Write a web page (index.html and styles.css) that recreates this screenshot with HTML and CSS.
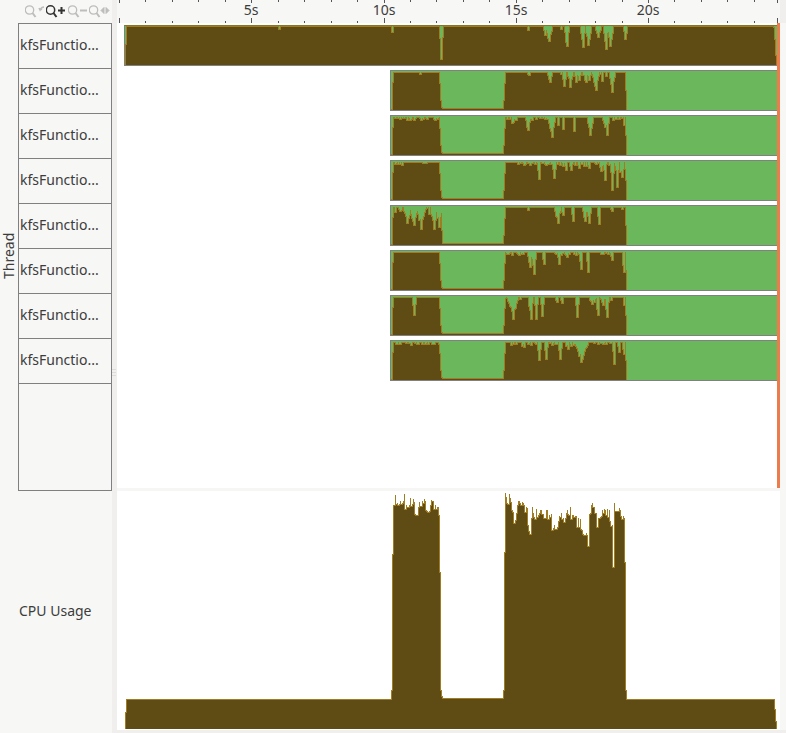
FILE: index.html
```html
<!DOCTYPE html>
<html lang="en">
<head>
    <meta charset="UTF-8">
    <title>Thread Timeline</title>
    <link rel="stylesheet" href="styles.css">
</head>
<body>
    <div class="app">
        <div class="sidebar">
            <div class="thread-side">
                <div class="axis-title">Thread</div>
                <div class="thread-col">
                    <div class="zoom-bar">
                        <svg class="zoom-icon" viewBox="0 0 21 16"><circle cx="4.5" cy="7" r="4.2"/><path class="handle" d="M7.5 10l3 4"/><path class="mark thin" d="M19 4c-2 0-3 1-4 3l-1-2m1 2l2-1"/></svg>
                        <svg class="zoom-icon active" viewBox="0 0 21 16"><circle cx="4.5" cy="7" r="4.2"/><path class="handle" d="M7.5 10l3 4"/><path class="mark" d="M12 7.5h7M15.5 4v7"/></svg>
                        <svg class="zoom-icon" viewBox="0 0 21 16"><circle cx="4.5" cy="7" r="4.2"/><path class="handle" d="M7.5 10l3 4"/><path class="mark" d="M12 7.5h7"/></svg>
                        <svg class="zoom-icon" viewBox="0 0 21 16"><circle cx="4.5" cy="7" r="4.2"/><path class="handle" d="M7.5 10l3 4"/><path class="mark fat" d="M12 7.5l3-3v6zM20 7.5l-3-3v6z"/></svg>
                    </div>
                    <div class="labels">
                        <div class="label">kfsFunctio...</div>
                        <div class="label">kfsFunctio...</div>
                        <div class="label">kfsFunctio...</div>
                        <div class="label">kfsFunctio...</div>
                        <div class="label">kfsFunctio...</div>
                        <div class="label">kfsFunctio...</div>
                        <div class="label">kfsFunctio...</div>
                        <div class="label">kfsFunctio...</div>
                    </div>
                </div>
            </div>
            <div class="cpu-label">CPU Usage</div>
        </div>

        <div class="splitter"><span class="grip"></span></div>

        <div class="main">
            <svg id="ruler" class="ruler" width="663" height="23"></svg>
            <div class="threads">
                <div class="track track-full"></div>
                <div class="track track-late"></div>
                <div class="track track-late"></div>
                <div class="track track-late"></div>
                <div class="track track-late"></div>
                <div class="track track-late"></div>
                <div class="track track-late"></div>
                <div class="track track-late"></div>
                <div class="cursor"></div>
            </div>
            <div class="strip"></div>
            <svg id="cpu" class="cpu" width="663" height="239"></svg>
            <div class="footer"></div>
        </div>

        <div class="gutter"></div>
    </div>

    <script src="chart.js"></script>
</body>
</html>
```

FILE: styles.css
```css
html, body {
    margin: 0;
    height: 100%;
    overflow: hidden;
}

body {
    font-family: "Noto Sans", sans-serif;
    font-size: 14px;
    color: #3c3c3c;
    background: #f7f7f5;
}

.app {
    display: flex;
    height: 733px;
}

.sidebar {
    width: 112px;
    display: flex;
    flex-direction: column;
}

.thread-side {
    display: flex;
    height: 491px;
}

.axis-title {
    width: 16px;
    margin-right: 2px;
    padding-bottom: 20px;
    box-sizing: border-box;
    display: flex;
    align-items: center;
    justify-content: center;
    writing-mode: vertical-rl;
    transform: rotate(180deg);
}

.thread-col {
    flex: 1;
    display: flex;
    flex-direction: column;
}

.zoom-bar {
    height: 23px;
    padding: 3px 0 0 7px;
    box-sizing: border-box;
    display: flex;
}

.zoom-icon {
    width: 21px;
    height: 16px;
    fill: none;
    stroke: #bdbdbb;
    stroke-width: 1.3;
}

.zoom-icon .handle {
    stroke-width: 2;
}

.zoom-icon .mark {
    stroke-width: 2;
}

.zoom-icon .mark.thin {
    stroke-width: 1.5;
}

.zoom-icon .mark.fat {
    fill: #bdbdbb;
    stroke-width: 1;
}

.zoom-icon.active {
    margin-right: 1px;
    stroke: #333;
    stroke-width: 1.5;
}

.labels {
    flex: 1;
    border: 1px solid #808080;
}

.label {
    height: 45px;
    box-sizing: border-box;
    padding: 0 0 3px 1px;
    border-bottom: 1px solid #808080;
    display: flex;
    align-items: center;
    white-space: nowrap;
}

.cpu-label {
    flex: 1;
    display: flex;
    align-items: center;
    padding: 0 0 3px 19px;
}

.splitter {
    width: 5px;
    padding-top: 369px;
    box-sizing: border-box;
    background: #f0efed;
}

.grip {
    display: block;
    width: 4px;
    height: 7px;
    background: repeating-linear-gradient(#dcdcda 0, #dcdcda 1px, transparent 1px, transparent 3px);
}

.main {
    width: 663px;
    display: flex;
    flex-direction: column;
}

.ruler {
    display: block;
    background: #f7f7f5;
}

.ruler text {
    font-family: "Noto Sans", sans-serif;
    font-size: 14px;
    fill: #3c3c3c;
    text-anchor: middle;
}

.threads {
    position: relative;
    height: 465px;
    padding: 2px 0 0 7px;
    box-sizing: border-box;
    background: #fff;
    display: flex;
    flex-direction: column;
    gap: 4px;
}

.track {
    height: 41px;
    box-sizing: border-box;
    background: #6bb75c;
    border: 1px solid #808080;
    border-right: none;
}

.track svg {
    display: block;
}

.track-full {
    width: 654px;
    border-top-color: #8a7526;
}

.track-late {
    width: 388px;
    margin-left: 266px;
}

.cursor {
    position: absolute;
    top: 0;
    bottom: 0;
    left: 660px;
    width: 3px;
    background: #ee7b4c;
}

.strip {
    height: 3px;
    background: #f6f6f5;
}

.cpu {
    display: block;
    background: #fff;
}

.footer {
    height: 3px;
    background: #f0efed;
}

.gutter {
    flex: 1;
    border-top: 23px solid #f0efed;
    border-bottom: 3px solid #f0efed;
}
```

FILE: chart.js
```js
const SVG_NS = 'http://www.w3.org/2000/svg';
const AMBER = '#a07c22';
const DARK = '#5f4b14';

// [start, end, depth] in page x, tapered notches cut from the top of a track
const threads = [
    { dips: [[279, 279, 2], [392, 392, 5], [440, 442, 32], [528, 528, 3], [544, 546, 8], [546, 551, 14], [561, 561, 2], [565, 568, 19], [581, 584, 20], [586, 590, 18], [596, 600, 10], [604, 607, 22], [608, 612, 19], [624, 626, 12]] },
    { dips: [[420, 420, 2], [528, 529, 3], [548, 551, 10], [561, 561, 2], [563, 565, 14], [568, 572, 15], [575, 577, 10], [578, 580, 8], [584, 587, 10], [588, 590, 8], [593, 598, 18], [602, 602, 9], [606, 606, 4], [610, 614, 20]], teeth: [[572, 600, 3]] },
    { dips: [[526, 529, 13], [549, 554, 20], [558, 558, 8], [563, 563, 12], [574, 574, 14], [588, 592, 18], [603, 606, 10], [606, 608, 18], [624, 624, 8]], teeth: [[393, 439, 3], [505, 516, 7], [530, 548, 3], [612, 624, 3]] },
    { dips: [[538, 539, 17], [553, 555, 16], [565, 566, 8], [570, 571, 8], [578, 579, 6], [588, 589, 6], [604, 605, 18], [611, 613, 28], [616, 618, 25], [621, 622, 15]], teeth: [[395, 405, 3], [421, 428, 2], [512, 560, 3], [560, 600, 4], [600, 625, 12]] },
    { dips: [[404, 410, 16], [410, 417, 18], [417, 424, 22], [432, 436, 22], [436, 441, 20], [528, 528, 3], [555, 560, 16], [562, 563, 8], [572, 573, 14], [583, 586, 14], [587, 590, 16], [598, 599, 17], [611, 612, 4], [622, 622, 2]], teeth: [[393, 404, 6], [424, 432, 9]], late: true },
    { dips: [[528, 531, 15], [532, 535, 22], [543, 544, 12], [558, 559, 12], [566, 567, 5], [580, 581, 17], [587, 588, 20], [611, 612, 8], [623, 624, 20]], teeth: [[505, 525, 3], [555, 580, 3], [595, 612, 3]] },
    { dips: [[413, 415, 18], [508, 517, 22], [520, 520, 2], [529, 532, 22], [535, 537, 22], [541, 543, 19], [556, 557, 5], [561, 562, 6], [576, 578, 20], [590, 594, 7], [597, 598, 18], [601, 604, 8], [606, 607, 20], [624, 624, 8]], teeth: [[505, 508, 3], [590, 612, 5]] },
    { dips: [[538, 540, 18], [545, 547, 17], [559, 561, 17], [568, 568, 7], [575, 587, 20], [613, 614, 22], [618, 619, 10], [623, 624, 12]], teeth: [[395, 439, 4], [505, 537, 5], [548, 575, 4], [590, 612, 2]] }
];

// top of the CPU curve in page y, held until the next x
const cpuLevels = [
    [393, 504], [395, 500], [403, 497], [405, 505], [407, 508], [409, 502], [411, 505], [413, 500], [415, 510], [418, 504], [422, 499], [426, 506], [430, 500], [434, 505], [437, 503], [439, 515],
    [505, 498], [512, 507], [514, 518], [516, 510], [518, 500], [525, 510], [528, 525], [530, 532], [531, 513], [540, 514], [552, 525], [558, 517], [566, 513], [577, 523], [581, 533], [588, 548], [589, 508], [597, 522], [600, 513], [610, 520], [613, 563], [614, 508], [620, 516], [625, 562]
];

function noise(i) {
    const s = Math.sin(i * 12.9898) * 43758.5453;
    return s - Math.floor(s);
}

function svgEl(name, attrs) {
    const el = document.createElementNS(SVG_NS, name);
    Object.keys(attrs).forEach(key => el.setAttribute(key, attrs[key]));
    return el;
}

// one amber column per pixel, with the dark body eroded a pixel inside it
function drawArea(svg, tops, bottom, offset) {
    let light = '';
    let dark = '';
    Object.keys(tops).forEach(key => {
        const x = Number(key);
        const y = tops[x];
        const bodyTop = Math.max(y, tops[x - 1] ?? bottom, tops[x + 1] ?? bottom) + 1;
        light += `M${x - offset + 0.5} ${y}V${bottom}`;
        if (bodyTop < bottom) {
            dark += `M${x - offset + 0.5} ${bodyTop}V${bottom}`;
        }
    });
    svg.appendChild(svgEl('path', { d: light, stroke: AMBER, 'shape-rendering': 'crispEdges' }));
    svg.appendChild(svgEl('path', { d: dark, stroke: DARK, 'shape-rendering': 'crispEdges' }));
}

function cutDips(tops, spec, row) {
    (spec.teeth || []).forEach(([start, end, depth]) => {
        for (let x = start; x <= end; x++) {
            if (noise(x * (row + 3)) > 0.45) {
                tops[x] = Math.max(tops[x], 1 + Math.round(noise(x + row * 50) * depth));
            }
        }
    });
    (spec.dips || []).forEach(([start, end, depth]) => {
        const mid = (start + end) / 2;
        const half = (end - start) / 2;
        for (let x = start; x <= end; x++) {
            const taper = 1 - Math.abs(x - mid) / (half + 1);
            const jag = x === Math.round(mid) ? 1 : taper * (0.6 + 0.4 * noise(x + row));
            tops[x] = Math.max(tops[x], 1 + Math.round(depth * jag));
        }
    });
}

function fullTops(spec) {
    const tops = {};
    for (let x = 126; x <= 776; x++) tops[x] = 0;
    tops[125] = 18;
    cutDips(tops, spec, 0);
    tops[774] = 1;
    tops[775] = 13;
    tops[776] = 29;
    return tops;
}

function lateTops(spec, row) {
    const tops = {};
    for (let x = 393; x <= 625; x++) tops[x] = 1;
    for (let x = 443; x <= 502; x++) tops[x] = 37;
    tops[391] = 38;
    tops[392] = 11;
    tops[440] = 12;
    tops[441] = 29;
    tops[442] = 36;
    tops[503] = 29;
    tops[504] = 12;
    tops[626] = 19;
    if (spec.late) {
        tops[440] = 1;
        tops[441] = 1;
        tops[442] = 24;
    }
    cutDips(tops, spec, row);
    return tops;
}

document.querySelectorAll('.track').forEach((track, row) => {
    const full = row === 0;
    const svg = svgEl('svg', { width: full ? 653 : 387, height: 39 });
    const tops = full ? fullTops(threads[0]) : lateTops(threads[row], row);
    drawArea(svg, tops, 39, full ? 125 : 391);
    track.appendChild(svg);
});

function cpuTops() {
    const tops = {};
    for (let x = 126; x <= 774; x++) tops[x] = 699;
    tops[125] = 712;
    tops[775] = 709;
    tops[776] = 721;
    cpuLevels.forEach(([start, y], i) => {
        const next = cpuLevels[i + 1];
        const end = next && next[0] - start < 30 ? next[0] : start + 1;
        for (let x = start; x < end; x++) {
            tops[x] = y + Math.round(noise(x) * 6) - (noise(x * 7) > 0.7 ? 6 : 0);
        }
    });
    tops[391] = 690;
    tops[392] = 554;
    for (let x = 443; x <= 502; x++) tops[x] = 698;
    tops[439] = 515;
    tops[440] = 572;
    tops[441] = 690;
    tops[442] = 696;
    tops[503] = 690;
    tops[504] = 552;
    tops[625] = 562;
    tops[626] = 690;
    Object.keys(tops).forEach(x => { tops[x] -= 491; });
    return tops;
}

drawArea(document.getElementById('cpu'), cpuTops(), 238, 117);

// time ruler, 26.45px to the second
const ruler = document.getElementById('ruler');
let ticks = '';
for (let s = 0; s < 25; s++) {
    const x = Math.round(2 + s * 26.45) + 0.5;
    const major = s % 5 === 0;
    ticks += `M${x} 0v${major ? 3 : 2}M${x} ${major ? 18 : 21}V23`;
    if (major && s > 0) {
        const label = svgEl('text', { x: x - 0.5, y: 15 });
        label.textContent = `${s}s`;
        ruler.appendChild(label);
    }
}
ticks += 'M660.5 0v3M660.5 18V23';
ruler.appendChild(svgEl('path', { d: ticks, stroke: '#555', 'shape-rendering': 'crispEdges' }));
```
